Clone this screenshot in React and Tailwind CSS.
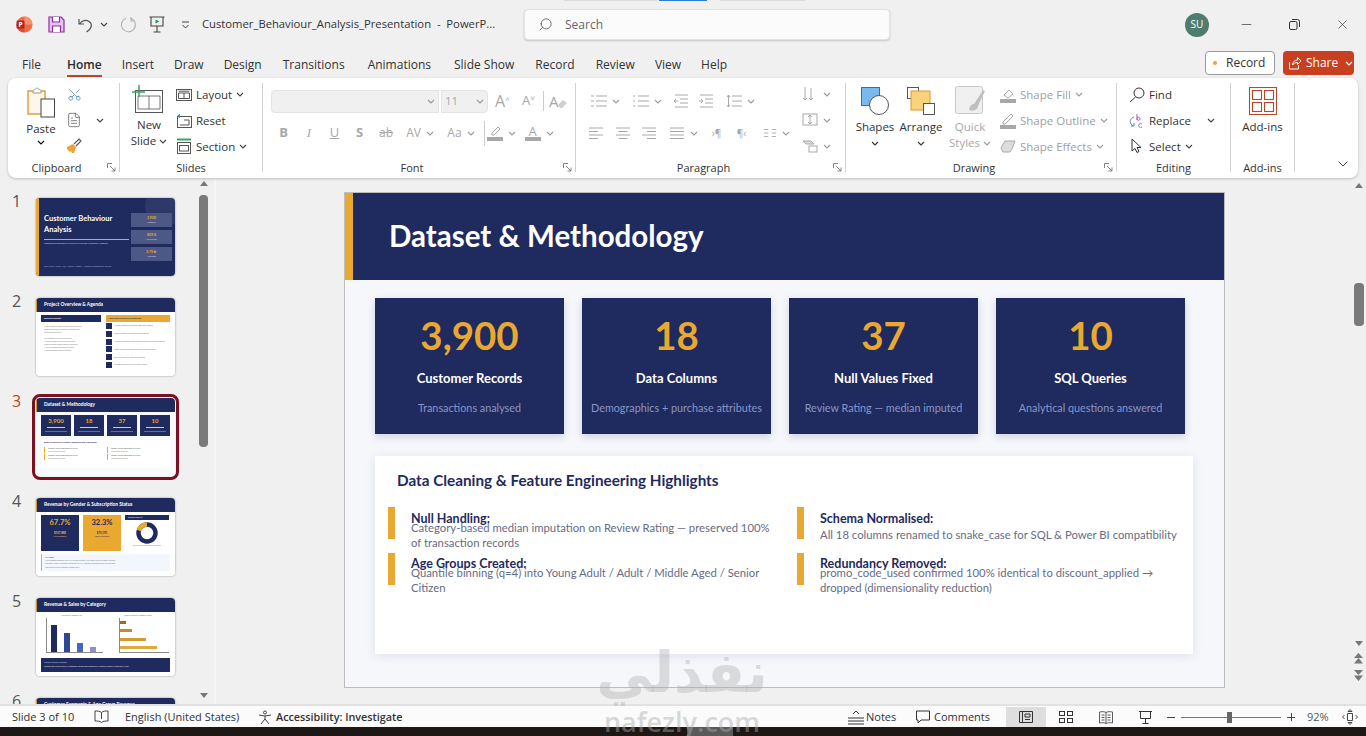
import { Search, Minus, X, Scissors, FileText } from 'lucide-react';

const UI = "font-['Open_Sans',sans-serif]";
const SLIDE = "font-['Lato',sans-serif]";

function Chev({ className = 'text-[#444]' }) {
  return (
    <svg width="8" height="5" viewBox="0 0 8 5" className={`shrink-0 ${className}`} fill="none" stroke="currentColor" strokeWidth="1.1">
      <path d="M1 1l3 3 3-3" />
    </svg>
  );
}

function Launcher() {
  return (
    <svg width="9" height="9" viewBox="0 0 9 9" fill="none" stroke="#777" strokeWidth="0.9" className="absolute right-[3px] bottom-[4px]">
      <path d="M.5 5V.5H5M3 3l5 5M8 4.5V8H4.5" />
    </svg>
  );
}

function Sep() {
  return <div className="w-px h-[89px] mt-[2px] bg-[#d2d2d2] shrink-0"></div>;
}

function Group({ width, label, launcher, children }) {
  return (
    <div className="relative flex flex-col h-[95px] shrink-0" style={{ width }}>
      <div className="h-[78px] flex">{children}</div>
      <div className={`h-[17px] text-center text-[11px] leading-[17px] text-[#333] ${launcher ? 'pr-[14px]' : ''}`}>{label}</div>
      {launcher && <Launcher />}
    </div>
  );
}

function Row({ icon, label, chev, gray, className = '' }) {
  return (
    <div className={`h-[26px] flex items-center gap-[4px] text-[11.5px] whitespace-nowrap ${gray ? 'text-[#a0a0a0]' : 'text-[#333]'} ${className}`}>
      <span className="w-[16px] h-[16px] flex items-center justify-center shrink-0">{icon}</span>
      <span>{label}</span>
      {chev && <Chev className={gray ? 'text-[#999]' : 'text-[#444]'} />}
    </div>
  );
}

// small stroke icons, all 16 box
function Ico({ children, stroke = '#555', size = 16, box = 16 }) {
  return (
    <svg width={size} height={size} viewBox={`0 0 ${box} ${box}`} fill="none" stroke={stroke} strokeWidth="1" className="shrink-0">
      {children}
    </svg>
  );
}

function PptLogo() {
  return (
    <svg width="17" height="17" viewBox="0 0 17 17" className="shrink-0">
      <circle cx="8.5" cy="8.5" r="8" fill="#ed6c47" />
      <path d="M8.5.5a8 8 0 0 1 8 8h-8z" fill="#ff8f6b" />
      <path d="M8.5 16.5a8 8 0 0 1-8-8h8z" fill="#d35230" />
      <rect x="0.5" y="4.5" width="8" height="8" rx="1.2" fill="#b7261c" />
      <text x="2.4" y="11" fontSize="6.5" fontWeight="700" fill="#fff" fontFamily="Open Sans">P</text>
    </svg>
  );
}

function TitleBar() {
  return (
    <div className="relative h-[45px] pt-[4px] flex items-center shrink-0">
      <div className="ml-[16px]"><PptLogo /></div>
      <svg width="17" height="17" viewBox="0 0 17 17" className="ml-[15px] shrink-0" fill="#e6c2ee" stroke="#8a2fa0" strokeWidth="1.2">
        <path d="M1 1h12l3 3v12H1z" />
        <path d="M4.5 1v5h7V1M4.5 16v-6h8v6" fill="#fff" />
      </svg>
      <svg width="16" height="16" viewBox="0 0 16 16" className="ml-[13px] shrink-0" fill="none" stroke="#555" strokeWidth="1.2">
        <path d="M1 2v5h5M1.5 7C4 3.5 8 2.5 11 4.5c3.500 2.300 3.500 6.500-2.500 10.500" />
      </svg>
      <Chev className="ml-[6px] text-[#444]" />
      <svg width="17" height="17" viewBox="0 0 17 17" className="ml-[12px] shrink-0" fill="none" stroke="#b5b5b5" strokeWidth="1.2">
        <path d="M11.500 2.500A7 7 0 1 1 6 2.200M11 1v4h4" />
      </svg>
      <svg width="16" height="17" viewBox="0 0 16 17" className="ml-[12px] shrink-0" fill="none" stroke="#444" strokeWidth="1.1">
        <path d="M.5 1h15M2 1v9h12V1M8 10v6M4.500 16h7" />
        <path d="M6.500 3.500l4 2-4 2z" fill="#2e9b57" stroke="none" />
      </svg>
      <svg width="9" height="8" viewBox="0 0 9 8" className="ml-[16px] shrink-0" fill="none" stroke="#444" strokeWidth="1">
        <path d="M1 1h7M1.500 4l3 3 3-3" />
      </svg>
      <span className="ml-[12px] w-[322px] text-[11.25px] text-[#333] whitespace-pre">Customer_Behaviour_Analysis_Presentation  -  PowerP...</span>
      <div className="w-[366px] h-[31px] bg-[#fbfbfb] rounded-[4px] border border-[#e2e2e2] shadow-[0_1px_2px_rgba(0,0,0,0.18)] flex items-center pl-[13px] gap-[12px] text-[12px] text-[#666]">
        <Search size={15} strokeWidth={1.3} className="text-[#555] -scale-x-100" />
        <span>Search</span>
      </div>
      <div className="ml-auto flex items-center">
        <div className="w-[24px] h-[24px] rounded-full bg-[#4f7c6f] text-white text-[10px] flex items-center justify-center">SU</div>
        <Minus size={15} strokeWidth={1.1} className="ml-[30px] text-[#333]" />
        <svg width="11" height="11" viewBox="0 0 11 11" className="ml-[35px]" fill="none" stroke="#333" strokeWidth="1">
          <rect x="0.500" y="2.500" width="7.500" height="8" rx="1.500" />
          <path d="M3 .5h5.500A2 2 0 0 1 10.500 2.500V8" />
        </svg>
        <X size={15} strokeWidth={1.1} className="ml-[35px] mr-[16px] text-[#333]" />
      </div>
      <div className="absolute top-0 left-[564px] w-[93px] h-px bg-[#dcdcdc]"></div>
      <div className="absolute top-0 left-[659px] w-[48px] h-px bg-[#2b7cd3]"></div>
      <div className="absolute top-0 left-[720px] w-[85px] h-px bg-[#dcdcdc]"></div>
    </div>
  );
}

function TabBar() {
  const tabs = [
    ['Insert', 'ml-[20px]'], ['Draw', 'ml-[20px]'], ['Design', 'ml-[20px]'],
    ['Transitions', 'ml-[21px]'], ['Animations', 'ml-[23px]'], ['Slide Show', 'ml-[23px]'], ['Record', 'ml-[21px]'],
    ['Review', 'ml-[21px]'], ['View', 'ml-[20px]'], ['Help', 'ml-[20px]'],
  ];
  return (
    <div className="h-[33px] pt-[6px] flex items-center text-[12px] text-[#333] shrink-0">
      <span className="ml-[22px]">File</span>
      <span className="relative ml-[26px] font-semibold text-[#2b2b2b]">
        Home
        <span className="absolute left-0 right-0 -bottom-[3px] h-[2px] bg-[#b7472a]"></span>
      </span>
      {tabs.map(([t, c]) => <span key={t} className={c}>{t}</span>)}
      <div className="ml-auto mb-[3px] flex items-center gap-[8px] mr-[12px]">
        <div className="w-[70px] h-[24px] bg-white border border-[#9a9a9a] rounded-[4px] flex items-center text-[12px] pl-[7px] gap-[9px]">
          <span className="w-[4px] h-[4px] rounded-full bg-[#f0a030]"></span>
          Record
        </div>
        <div className="w-[71px] h-[24px] bg-[#c8401f] rounded-[4px] flex items-center text-white text-[12px] pl-[5px] gap-[4px]">
          <svg width="14" height="14" viewBox="0 0 14 14" fill="none" stroke="#fff" strokeWidth="1">
            <path d="M1.500 6v7h9V9M4.500 9c0-3 2.500-5 5-5V1.500L13 5l-3.500 3.500V6.500C7.500 6.500 5.500 7.500 4.500 9z" />
          </svg>
          Share
          <Chev className="text-white ml-[3px]" />
        </div>
      </div>
    </div>
  );
}

function Cell({ w, children, className = '' }) {
  return <div className={`flex items-center justify-center gap-[5px] shrink-0 ${className}`} style={{ width: w }}>{children}</div>;
}

const G = '#a8a8a8';

function Ribbon() {
  return (
    <div className="mx-[8px] h-[100px] bg-white rounded-[8px] shadow-[0_1px_3px_rgba(0,0,0,0.22)] flex items-start pt-[3px] shrink-0 relative">
      <Group width={111} label="Clipboard" launcher>
        <div className="w-[50px] ml-[8px] flex flex-col items-center pt-[6px]">
          <svg width="28" height="31" viewBox="0 0 28 31" fill="none">
            <path d="M1 4h17v23H1z" fill="#fdf6ea" stroke="#e0a040" strokeWidth="1.500" />
            <path d="M6 4c0-1 1.500-1.500 2-1.500S9 .8 10 .8s1.200 1.700 2 1.700 2 .5 2 1.500v2H6z" fill="#fff" stroke="#999" />
            <rect x="14" y="12" width="13.500" height="18" fill="#fff" stroke="#444" />
          </svg>
          <span className="text-[11.5px] text-[#333] mt-[3px] leading-[16px]">Paste</span>
          <Chev className="mt-[3px]" />
        </div>
        <div className="flex flex-col">
          <div className="h-[26px] w-[16px] flex items-center justify-center"><Scissors size={15} strokeWidth={1.1} className="text-[#3a7ab8] -rotate-90" /></div>
          <div className="h-[26px] flex items-center gap-[14px]"><FileText size={16} strokeWidth={1} className="text-[#444]" /><Chev /></div>
          <div className="h-[26px] w-[16px] flex items-center justify-center">
            <svg width="16" height="16" viewBox="0 0 16 16">
              <path d="M1 9l6-3 3 3-2 6H6l-1-2-1 1-3-3z" fill="#eda33a" />
              <path d="M8 6l5-5 2 2-5 5" fill="none" stroke="#555" strokeWidth="1.100" />
            </svg>
          </div>
        </div>
      </Group>
      <Sep />
      <Group width={142} label="Slides">
        <div className="w-[58px] flex flex-col items-center pt-[4px] text-[11.5px] text-[#333] leading-[16px] shrink-0">
          <svg width="31" height="28" viewBox="0 0 31 28" fill="none" stroke="#555" className="-ml-[4px]">
            <rect x="3.500" y="5.500" width="27" height="22" />
            <path d="M6 11h22v13H6zM17 11v13" strokeWidth="0.800" />
            <path d="M7 0v12M0 7h13" stroke="#3da35d" strokeWidth="1.500" />
          </svg>
          <span className="mt-[4px]">New</span>
          <span className="flex items-center gap-[3px]">Slide <Chev /></span>
        </div>
        <div className="flex flex-col -ml-[2px] pt-[1px]">
          <Row label="Layout" chev icon={<Ico><rect x=".5" y="2.500" width="15" height="11" /><path d="M2.500 6h11v5.500h-11zM8 6v5.500M2.500 4.200h11" /></Ico>} />
          <Row label="Reset" icon={<Ico><rect x="1.500" y="3.500" width="14" height="11" /><path d="M8 7h5v5H4" /><path d="M1 3l3-2.500V5.500z" fill="#3a8dd8" stroke="none" /></Ico>} />
          <Row label="Section" chev icon={<Ico><path d="M1 1.500h14" stroke="#3da35d" strokeWidth="2" /><rect x="1.500" y="4.500" width="13" height="11" /><rect x="3.500" y="7.500" width="9" height="5.500" /></Ico>} />
        </div>
      </Group>
      <Sep />
      <Group width={312} label="Font" launcher>
        <div className="flex flex-col pl-[8px]">
          <div className="h-[38px] flex items-center mt-[1px]">
            <div className="w-[168px] h-[23px] bg-[#f0f0f0] border border-[#e4e4e4] rounded-l-[4px] flex items-center justify-end pr-[3px]"><Chev className="text-[#999]" /></div>
            <div className="w-[47px] ml-[2px] h-[23px] bg-[#f0f0f0] border border-[#e4e4e4] rounded-r-[4px] flex items-center justify-between px-[3px] text-[11.5px] text-[#a8a8a8]">11<Chev className="text-[#999]" /></div>
            <span className="ml-[7px] text-[16px] text-[#a8a8a8] w-[24px]">A<sup className="text-[8px]">^</sup></span>
            <span className="ml-[3px] text-[13px] text-[#a8a8a8] w-[20px]">A<sup className="text-[8px]">˅</sup></span>
            <div className="w-px h-[20px] bg-[#ccc] ml-[1px]"></div>
            <span className="ml-[5px] text-[15px] text-[#a8a8a8]">A</span>
            <svg width="10" height="10" viewBox="0 0 10 10" fill="#cfcfcf" className="-ml-[1px] mt-[6px]"><path d="M0 6l5-5 4 3-5 5H2z" /></svg>
          </div>
          <div className="h-[26px] flex items-center text-[#a8a8a8] text-[13px]">
            <Cell w={25} className="font-bold">B</Cell>
            <Cell w={26} className="italic font-['Liberation_Serif',serif]">I</Cell>
            <Cell w={25} className="underline">U</Cell>
            <Cell w={25} className="font-bold">S</Cell>
            <Cell w={28} className="line-through text-[12px]">ab</Cell>
            <Cell w={40} className="text-[12px]">AV<Chev className="text-[#999]" /></Cell>
            <Cell w={42} className="text-[12px]">Aa<Chev className="text-[#999]" /></Cell>
            <div className="w-px h-[25px] bg-[#ccc] ml-[2px]"></div>
            <Cell w={33}>
              <svg width="16" height="15" viewBox="0 0 16 15" fill="none" stroke="#a8a8a8"><path d="M5 7l6-6 2 2-6 6H5z" /><rect x="0" y="11" width="16" height="4" fill="#a8a8a8" stroke="none" /></svg>
              <Chev className="text-[#999]" />
            </Cell>
            <Cell w={38} className="ml-[2px]">
              <span className="flex flex-col items-center leading-[11px]">A<span className="w-[16px] h-[4px] bg-[#a8a8a8]"></span></span>
              <Chev className="text-[#999]" />
            </Cell>
          </div>
        </div>
      </Group>
      <Sep />
      <Group width={269} label="Paragraph" launcher>
        <div className="flex">
          <div className="flex flex-col pl-[7px] w-[222px]">
            <div className="h-[38px] flex items-center mt-[1px]">
              <Cell w={44}><Ico stroke={G} box={16}><path d="M5 3h11M5 8h11M5 13h11M0 3h3M0 8h3M0 13h3" strokeWidth="1.200" /></Ico><Chev className="text-[#999]" /></Cell>
              <Cell w={41}><Ico stroke={G} box={16}><path d="M5 3h11M5 8h11M5 13h11M0 3h2M0 8h2M0 13h2" strokeWidth="1.200" /></Ico><Chev className="text-[#999]" /></Cell>
              <Cell w={25}><Ico stroke={G}><path d="M2 2h13M7 6h8M7 10h8M2 14h13M5 8H1M3 6L1 8l2 2" /></Ico></Cell>
              <Cell w={25}><Ico stroke={G}><path d="M2 2h13M7 6h8M7 10h8M2 14h13M1 8h4M3 6l2 2-2 2" /></Ico></Cell>
              <Cell w={44}><Ico stroke={G}><path d="M6 3h10M6 8h10M6 13h10M2.500 2v12M1 4l1.500-2L4 4M1 12l1.500 2L4 12" /></Ico><Chev className="text-[#999]" /></Cell>
            </div>
            <div className="h-[26px] flex items-center">
              <Cell w={26}><Ico stroke={G}><path d="M1 3h14M1 6.500h9M1 10h14M1 13.500h9" /></Ico></Cell>
              <Cell w={27}><Ico stroke={G}><path d="M1 3h14M3.500 6.500h9M1 10h14M3.500 13.500h9" /></Ico></Cell>
              <Cell w={26}><Ico stroke={G}><path d="M1 3h14M6 6.500h9M1 10h14M6 13.500h9" /></Ico></Cell>
              <Cell w={42}><Ico stroke={G}><path d="M1 3h14M1 6.500h14M1 10h14M1 13.500h14" /></Ico><Chev className="text-[#999]" /></Cell>
              <Cell w={25} className="text-[10px] text-[#a8a8a8]">›¶</Cell>
              <Cell w={25} className="text-[10px] text-[#a8a8a8]">¶‹</Cell>
              <Cell w={44}><Ico stroke={G} size={14}><path d="M1 4h5M1 8h5M1 12h5M10 4h5M10 8h5M10 12h5" /></Ico><Chev className="text-[#999]" /></Cell>
            </div>
          </div>
          <div className="flex flex-col pl-[4px]">
            <div className="h-[26px] flex items-center gap-[5px]"><Ico stroke={G}><path d="M3 1v13M1 12l2 2 2-2M9 2v12M7 12l2 2 2-2" /></Ico><Chev className="text-[#999]" /></div>
            <div className="h-[26px] flex items-center gap-[5px]"><Ico stroke={G}><rect x="1" y="2" width="14" height="11" /><path d="M8 3v9M6 5l2-2 2 2M6 10l2 2 2-2" /></Ico><Chev className="text-[#999]" /></div>
            <div className="h-[26px] flex items-center gap-[5px]"><Ico stroke={G}><path d="M1 3h8l3 3H4z" fill="#ddd" /><rect x="7" y="8" width="8" height="6" /></Ico><Chev className="text-[#999]" /></div>
          </div>
        </div>
      </Group>
      <Sep />
      <Group width={270} label="Drawing" launcher>
        <div className="w-[58px] flex flex-col items-center pt-[6px] text-[11.5px] text-[#333] leading-[16px]">
          <svg width="29" height="28" viewBox="0 0 29 28">
            <rect x=".5" y=".5" width="18" height="18" fill="#7ab8f0" stroke="#2a6fb8" />
            <circle cx="18" cy="18" r="9.500" fill="#fff" stroke="#555" />
          </svg>
          <span className="mt-[4px]">Shapes</span>
          <Chev className="mt-[6px]" />
        </div>
        <div className="w-[46px] -ml-[6px] flex flex-col items-center pt-[6px] text-[11.5px] text-[#333] leading-[16px]">
          <svg width="28" height="28" viewBox="0 0 28 28">
            <rect x=".5" y=".5" width="11" height="11" fill="#fff" stroke="#555" />
            <rect x="4" y="4" width="19" height="19" fill="#fbd27c" stroke="#d49a2c" />
            <rect x="16.500" y="16.500" width="11" height="11" fill="#fff" stroke="#555" />
          </svg>
          <span className="mt-[4px]">Arrange</span>
          <Chev className="mt-[6px]" />
        </div>
        <div className="w-[46px] ml-[3px] flex flex-col items-center pt-[6px] text-[11.5px] text-[#a8a8a8] leading-[16px]">
          <svg width="31" height="30" viewBox="0 0 31 30" className="-mt-[1px]">
            <rect x=".5" y=".5" width="27" height="27" rx="2" fill="#f0f0f0" stroke="#c8c8c8" />
            <path d="M14 24c1-5 3-6 5-6l9-14 2 1-7 15c0 3-4 6-9 4z" fill="#c0c0c0" />
          </svg>
          <span className="mt-[3px]">Quick</span>
          <span className="flex items-center gap-[3px]">Styles <Chev className="text-[#999]" /></span>
        </div>
        <div className="flex flex-col ml-[7px] pt-[1px]">
          <Row gray label="Shape Fill" chev icon={<Ico stroke={G}><path d="M4 8l5-5 4 4-5 4z" /><rect y="12" width="16" height="4" fill={G} stroke="none" /></Ico>} />
          <Row gray label="Shape Outline" chev icon={<Ico stroke={G}><path d="M3 9l8-8 2 2-8 8H3z" /><rect y="12" width="16" height="4" fill={G} stroke="none" /></Ico>} />
          <Row gray label="Shape Effects" chev icon={<Ico stroke={G}><path d="M1 10l4-7h10l-3 8-2 3H3z" fill="#ddd" /></Ico>} />
        </div>
      </Group>
      <Sep />
      <Group width={113} label="Editing">
        <div className="flex flex-col pl-[12px] pt-[1px]">
          <Row label="Find" icon={<Ico stroke="#333"><circle cx="10" cy="6" r="5" /><path d="M6.500 10L1 15" /></Ico>} />
          <div className="flex items-center gap-[16px]">
            <Row label="Replace" icon={
              <svg width="16" height="16" viewBox="0 0 16 16" fill="none" stroke="#3a8dd8">
                <path d="M5 4C2 5 0 8 2 11l2 2M2 13h3v-3" />
                <path d="M8 1v6M8 5.500a1.500 1.500 0 1 1 0 .5" stroke="#a040b0" strokeWidth=".9" />
                <path d="M13 11a2 2 0 1 0 0 3" strokeWidth=".9" />
              </svg>
            } />
            <Chev />
          </div>
          <Row label="Select" chev icon={<Ico stroke="#333"><path d="M3 1v12l3-2.500 2 4 2-1-2-4h4z" /></Ico>} />
        </div>
      </Group>
      <Sep />
      <Group width={63} label="Add-ins">
        <div className="w-full flex flex-col items-center pt-[6px] text-[11.5px] text-[#333] leading-[16px]">
          <svg width="28" height="28" viewBox="0 0 28 28" fill="none" stroke="#b7472a" strokeWidth="1.100">
            <rect x=".5" y=".5" width="27" height="27" />
            <rect x="3.500" y="3.500" width="9" height="9" />
            <rect x="15.500" y="3.500" width="9" height="9" />
            <rect x="3.500" y="15.500" width="9" height="9" />
            <rect x="15.500" y="15.500" width="9" height="9" />
          </svg>
          <span className="mt-[4px]">Add-ins</span>
        </div>
      </Group>
      <Sep />
      <svg width="10" height="6" viewBox="0 0 10 6" fill="none" stroke="#444" className="absolute right-[10px] bottom-[11px]">
        <path d="M.5.5L5 5 9.500.5" />
      </svg>
    </div>
  );
}

function T({ c = 'text-[#777]', children }) {
  return <p className={`text-[1.8px] leading-[3.200px] whitespace-nowrap overflow-hidden ${c}`}>{children}</p>;
}

function ThumbHead({ title }) {
  return (
    <div className="h-[14px] bg-[#1f2a5e] flex items-center pl-[7px] border-l-[1px] border-[#c9962c] shrink-0">
      <span className="text-[4.800px] font-bold text-white whitespace-nowrap">{title}</span>
    </div>
  );
}

function Thumb1() {
  return (
    <div className="relative h-full bg-[#1f2a5e] border-l-[3px] border-[#e9a830] flex pl-[5px] overflow-hidden">
      <div className="absolute -right-[10px] -top-[12px] w-[40px] h-[40px] rounded-full bg-[rgba(255,255,255,0.07)]"></div>
      <div className="w-[85px] flex flex-col pt-[15px]">
        <p className="text-[7.500px] leading-[11px] font-bold text-white">Customer Behaviour Analysis</p>
        <div className="h-[1px] bg-[#e9a830] mt-[4px]"></div>
        <p className="mt-[2px] text-[2.400px] text-[#c6cce8] whitespace-nowrap">Optimising Retention & Revenue Through Consumer Insights</p>
        <p className="mt-[19px] text-[1.800px] text-[#aab2d8] whitespace-nowrap">Data Analyst · Python · SQL · Power BI · Gamma — Customer Shopping Data Analytics</p>
      </div>
      <div className="relative ml-[2px] w-[41px] flex flex-col gap-[3px] pt-[15px]">
        {[['3,900', 'Customers'], ['$59.8', 'Avg Purchase'], ['3.75★', 'Avg Rating']].map(([a, b]) => (
          <div key={a} className="h-[14px] bg-[#4e5887] flex flex-col items-center justify-center">
            <span className="text-[3.500px] leading-[5px] font-bold text-[#e9a830]">{a}</span>
            <span className="text-[1.800px] leading-[3px] text-[#d6daf0]">{b}</span>
          </div>
        ))}
      </div>
    </div>
  );
}

function Thumb2() {
  const rows = ['Analyse customer purchasing patterns by segment', 'Uncover category & seasonal revenue drivers', 'Measure subscription and discount influence on spend behaviour', 'Identify top performing products and shipping modes', 'Build an interactive Power BI dashboard', 'Recommend data-driven retention actions'];
  return (
    <div className="h-full bg-white flex flex-col">
      <ThumbHead title="Project Overview & Agenda" />
      <div className="flex px-[5px] pt-[3px] gap-[5px]">
        <div className="w-[60px]">
          <div className="h-[7px] bg-[#1f2a5e] text-[2px] leading-[7px] font-bold text-white pl-[3px]">Business Challenge</div>
          <div className="mt-[3px] px-[3px]">
            <T>A retail company wants to understand customer</T>
            <T>shopping behaviour to improve retention and</T>
            <T>increase lifetime value.</T>
            <div className="h-[2px]"></div>
            <T>Key questions the analysis answers:</T>
            <T>• Which groups drive the most revenue</T>
            <T>• Do discounts change purchase behaviour</T>
            <T>• How do subscribers spend vs others</T>
            <T>• Which products rate the highest</T>
          </div>
        </div>
        <div className="w-[64px]">
          <div className="h-[7px] bg-[#e9a830] text-[2px] leading-[7px] font-bold text-[#1f2a5e] pl-[3px]">Project Deliverables & Workstreams</div>
          <div className="mt-[1px] flex flex-col gap-[1.800px]">
            {rows.map((r) => (
              <div key={r} className="flex items-center gap-[2px] h-[6px]">
                <span className="w-[6px] h-[6px] bg-[#1f2a5e] shrink-0"></span>
                <T>{r}</T>
              </div>
            ))}
          </div>
        </div>
      </div>
    </div>
  );
}

function Thumb3() {
  return (
    <div className="h-full bg-[#f7f9fc] flex flex-col">
      <ThumbHead title="Dataset & Methodology" />
      <div className="flex gap-[3px] px-[5px] pt-[3px]">
        {['3,900', '18', '37', '10'].map((n) => (
          <div key={n} className="w-[30px] h-[21px] bg-[#1f2a5e] flex flex-col items-center pt-[2px]">
            <span className="text-[6px] leading-[8px] font-bold text-[#e9a830]">{n}</span>
            <span className="w-[18px] h-[1px] mt-[2px] bg-[#c8cce0]"></span>
            <span className="w-[22px] h-[1px] mt-[3px] bg-[#5e6aa0]"></span>
          </div>
        ))}
      </div>
      <div className="mx-[5px] mt-[4px] h-[28px] bg-white px-[3px] pt-[1px]">
        <p className="text-[2.500px] font-bold text-[#1f2a5e] whitespace-nowrap">Data Cleaning & Feature Engineering Highlights</p>
        <div className="grid grid-cols-2 gap-x-[2px] mt-[2px]">
          {[1, 2, 3, 4].map((k) => (
            <div key={k} className="border-l border-[#e9a830] pl-[3px] h-[6px] mb-[1px]">
              <T c="text-[#555]">Category-based imputation on review</T>
              <T c="text-[#888]">of transaction records</T>
            </div>
          ))}
        </div>
      </div>
    </div>
  );
}

function Thumb4() {
  return (
    <div className="h-full bg-white flex flex-col">
      <ThumbHead title="Revenue by Gender & Subscription Status" />
      <div className="flex px-[5px] pt-[3px] gap-[4px]">
        <div className="w-[38px] h-[36px] bg-[#1f2a5e] flex flex-col items-center pt-[3px]">
          <span className="text-[7.500px] leading-[10px] font-bold text-[#e9a830]">67.7%</span>
          <span className="text-[2.800px] mt-[3px] font-bold text-[#e9c070]">$157,890</span>
          <span className="text-[1.800px] text-[#e9c070]">Male Customers</span>
        </div>
        <div className="w-[38px] h-[36px] bg-[#e9a830] flex flex-col items-center pt-[3px]">
          <span className="text-[7.500px] leading-[10px] font-bold text-[#1f2a5e]">32.3%</span>
          <span className="text-[2.800px] mt-[3px] font-bold text-[#1f2a5e]">$75,191</span>
          <span className="text-[1.800px] text-[#1f2a5e]">Female Customers</span>
        </div>
        <div className="w-[44px] flex flex-col items-center">
          <div className="w-full h-[5px] bg-[#1f2a5e] text-[1.800px] leading-[5px] text-white pl-[3px]">Revenue Share (%)</div>
          <svg width="22" height="22" viewBox="0 0 22 22" className="mt-[2px]">
            <circle cx="11" cy="11" r="8.500" fill="none" stroke="#1f2a5e" strokeWidth="4.500" />
            <path d="M11 2.500A8.500 8.500 0 0 0 3 8.500" fill="none" stroke="#e9a830" strokeWidth="4.500" />
          </svg>
          <T>■ Male Revenue ■ Female Revenue</T>
        </div>
      </div>
      <div className="mx-[5px] mt-[3px] h-[17px] border-l border-[#e9a830] bg-[#f3f6fc] pl-[3px] pt-[2px]">
        <T c="text-[#333]">Key Insight</T>
        <T>Male customers account for 67.7% of total revenue ($157,890), driven by higher purchase</T>
        <T>frequency. Female customers represent $75,191. Targeted campaigns could close the gap</T>
        <T>and increase overall customer lifetime value.</T>
      </div>
    </div>
  );
}

function Thumb5() {
  const bars = [[27, 'bg-[#1f2a5e]'], [19, 'bg-[#2f4795]'], [9, 'bg-[#4a66b8]'], [5, 'bg-[#8a90c8]']];
  const hbars = [[6, 'bg-[#a8651c]'], [12, 'bg-[#c98a28]'], [26, 'bg-[#d49a30]'], [37, 'bg-[#e0aa38]']];
  return (
    <div className="h-full bg-white flex flex-col">
      <ThumbHead title="Revenue & Sales by Category" />
      <div className="flex px-[5px] pt-[2px] gap-[4px] h-[44px]">
        <div className="w-[62px] flex flex-col">
          <T c="text-[#666] text-center">Revenue by Category ($K)</T>
          <div className="ml-[5px] mt-[1px] h-[35px] border-l border-b border-[#8a8a8a] flex items-end gap-[7px] pl-[4px]">
            {bars.map(([h, c], i) => <div key={i} className={`w-[6px] ${c}`} style={{ height: h }}></div>)}
          </div>
        </div>
        <div className="w-[62px] flex flex-col">
          <T c="text-[#666] text-center">Orders Volume by Category (Units)</T>
          <div className="ml-[12px] mt-[1px] h-[35px] border-l border-b border-[#8a8a8a] flex flex-col justify-around">
            {hbars.map(([w, c], i) => <div key={i} className={`h-[3px] ${c}`} style={{ width: w }}></div>)}
          </div>
        </div>
      </div>
      <div className="mx-[5px] mt-[2px] h-[14px] bg-[#1f2a5e] pl-[3px] pt-[3px]">
        <T c="text-[#c6cce8]">Category Revenue Highlights</T>
        <div className="mt-[1px]"><T c="text-[#e0e4f4]">Clothing: Top revenue driver   •   Accessories: Strong, high-margin line   •   Footwear: Steady   •   Outerwear: Niche</T></div>
      </div>
    </div>
  );
}

function ThumbRow({ n, active, children }) {
  return (
    <div className="flex h-[100px] shrink-0">
      <span className={`w-[36px] pl-[12px] -mt-[4px] text-[16px] leading-[14px] ${active ? 'text-[#c43e1c]' : 'text-[#555]'}`}>{n}</span>
      <div className={`relative w-[139px] h-[78px] rounded-[4px] overflow-hidden ${active ? 'outline-[3px] outline outline-offset-[1px] outline-[#7b1020] rounded-[2px]' : 'shadow-[0_0_2px_rgba(0,0,0,0.45)]'} ${SLIDE}`}>
        {children}
      </div>
    </div>
  );
}

function Thumbs() {
  return (
    <div className="w-[216px] flex shrink-0 overflow-hidden border-r-[2px] border-[#f6f6f6]">
      <div className="w-[198px] pt-[20px] flex flex-col overflow-hidden">
        <ThumbRow n="1"><Thumb1 /></ThumbRow>
        <ThumbRow n="2"><Thumb2 /></ThumbRow>
        <ThumbRow n="3" active><Thumb3 /></ThumbRow>
        <ThumbRow n="4"><Thumb4 /></ThumbRow>
        <ThumbRow n="5"><Thumb5 /></ThumbRow>
        <ThumbRow n="6"><ThumbHead title="Customer Segments & Age Group Revenue" /></ThumbRow>
      </div>
      <div className="w-[16px] flex flex-col items-start pl-[1px]">
        <div className="w-0 h-0 mt-[3px] border-l-[4px] border-r-[4px] border-b-[5px] border-l-transparent border-r-transparent border-b-[#777] translate-x-[1px]"></div>
        <div className="w-[9px] h-[252px] mt-[9px] rounded-[4px] bg-[#7a7a7a]"></div>
        <div className="w-0 h-0 mt-[246px] border-l-[4px] border-r-[4px] border-t-[5px] border-l-transparent border-r-transparent border-t-[#777] translate-x-[1px]"></div>
      </div>
    </div>
  );
}

function StatCard({ num, label, sub }) {
  return (
    <div className="w-[189px] h-[136px] bg-[#1f2a5e] shadow-[0_3px_8px_rgba(31,42,94,0.18)] flex flex-col items-center pt-[14px]">
      <span className="text-[38.500px] leading-[46px] font-bold text-[#e9a830]">{num}</span>
      <span className="mt-[11px] text-[13px] leading-[18px] font-bold text-white">{label}</span>
      <span className="mt-[13px] text-[10.800px] leading-[16px] text-[#8a96c8] whitespace-nowrap">{sub}</span>
    </div>
  );
}

function Highlight({ head, lines, tall, second }) {
  return (
    <div className="flex h-[46px]">
      <div className="w-[7px] h-[32px] bg-[#e9a830] shrink-0"></div>
      <div className={`ml-[16px] ${second ? 'pt-[5px]' : 'pt-[6px]'}`}>
        <p className="text-[12.500px] leading-[12px] font-bold text-[#1f2a5e]">{head}</p>
        <div className={`text-[11.300px] leading-[15px] text-[#666c85] whitespace-nowrap ${tall ? 'mt-[2px]' : '-mt-[5px]'}`}>
          {lines.map((l) => <p key={l}>{l}</p>)}
        </div>
      </div>
    </div>
  );
}

function Slide() {
  return (
    <div className={`w-[881px] h-[496px] bg-[#f5f7fb] border border-[#bdbdbd] shrink-0 ${SLIDE}`}>
      <div className="h-[87px] bg-[#1f2a5e] border-l-[8px] border-[#e9a830] flex items-center pl-[36px]">
        <h1 className="text-[29.500px] font-bold text-white">Dataset & Methodology</h1>
      </div>
      <div className="flex pl-[30px] pt-[18px] gap-[18px]">
        <StatCard num="3,900" label="Customer Records" sub="Transactions analysed" />
        <StatCard num="18" label="Data Columns" sub="Demographics + purchase attributes" />
        <StatCard num="37" label="Null Values Fixed" sub="Review Rating — median imputed" />
        <StatCard num="10" label="SQL Queries" sub="Analytical questions answered" />
      </div>
      <div className="ml-[30px] mt-[22px] w-[818px] h-[198px] bg-white shadow-[0_2px_10px_rgba(31,42,94,0.1)] pl-[13px] pt-[14px]">
        <h2 className="ml-[9px] text-[15.250px] leading-[20px] font-bold text-[#1f2a5e]">Data Cleaning & Feature Engineering Highlights</h2>
        <div className="grid grid-cols-[409px_1fr] mt-[17px]">
          <Highlight head="Null Handling:" lines={['Category-based median imputation on Review Rating — preserved 100%', 'of transaction records']} />
          <Highlight tall head="Schema Normalised:" lines={['All 18 columns renamed to snake_case for SQL & Power BI compatibility']} />
          <Highlight second head="Age Groups Created:" lines={['Quantile binning (q=4) into Young Adult / Adult / Middle Aged / Senior', 'Citizen']} />
          <Highlight second head="Redundancy Removed:" lines={['promo_code_used confirmed 100% identical to discount_applied →', 'dropped (dimensionality reduction)']} />
        </div>
      </div>
    </div>
  );
}

function RightScroll() {
  return (
    <div className="w-[15px] ml-auto flex flex-col items-center shrink-0">
      <div className="mt-[5px] w-0 h-0 border-l-[4px] border-r-[4px] border-b-[5px] border-l-transparent border-r-transparent border-b-[#777]"></div>
      <div className="w-[10px] h-[43px] mt-[95px] rounded-[4px] bg-[#7a7a7a]"></div>
      <div className="mt-[315px] w-0 h-0 border-l-[4px] border-r-[4px] border-t-[5px] border-l-transparent border-r-transparent border-t-[#777]"></div>
      <svg width="9" height="11" viewBox="0 0 9 11" fill="#777" className="mt-[7px]"><path d="M4.500 0L9 5H0zM4.500 5L9 10.500H0z" /></svg>
      <svg width="9" height="11" viewBox="0 0 9 11" fill="#777" className="mt-[6px]"><path d="M4.500 5L0 0h9zM4.500 11L0 5.500h9z" /></svg>
    </div>
  );
}

function StatusBar() {
  return (
    <div className="h-[23px] pt-px bg-[#fbfbfb] border-t-[2px] border-[#e2e2e2] flex items-center text-[11px] text-[#333] shrink-0">
      <span className="ml-[12px] w-[82px]">Slide 3 of 10</span>
      <svg width="15" height="14" viewBox="0 0 15 14" fill="none" stroke="#444"><path d="M7.500 2.500C6 1 3 1 1 1v10c2 0 5 0 6.500 1.500C9 11 12 11 14 11V1c-2 0-5 0-6.500 1.500zM7.500 2.500V9" /></svg>
      <span className="ml-[16px] w-[133px] whitespace-nowrap">English (United States)</span>
      <svg width="15" height="15" viewBox="0 0 15 15" fill="none" stroke="#444">
        <circle cx="7" cy="2.500" r="1.500" />
        <path d="M1 5l6 1 6-1M7 6v3M3 14l4-5 4 5" />
      </svg>
      <span className="ml-[3px] font-semibold text-[10.800px] whitespace-nowrap">Accessibility: Investigate</span>
      <div className="ml-auto flex items-center h-full">
        <svg width="16" height="15" viewBox="0 0 16 15" fill="none" stroke="#333"><path d="M0 8h16M0 11h16M0 14h16M5 4l3-3 3 3" /></svg>
        <span className="ml-[2px] w-[50px]">Notes</span>
        <svg width="14" height="14" viewBox="0 0 14 14" fill="none" stroke="#333"><path d="M.5 1h13v9H5l-3 3v-3H.5z" /></svg>
        <span className="ml-[4px] w-[72px]">Comments</span>
        <div className="w-[40px] h-full bg-[#dedede] flex items-center justify-center">
          <svg width="14" height="12" viewBox="0 0 14 12" fill="none" stroke="#333"><path d="M.5.5h13v11H.5zM3.500.5v11M6 3h5v3H6zM6 8.500h5" /></svg>
        </div>
        <div className="w-[40px] flex justify-center">
          <svg width="14" height="12" viewBox="0 0 14 12" fill="none" stroke="#333"><rect x=".5" y=".5" width="5" height="4" /><rect x="8.500" y=".5" width="5" height="4" /><rect x=".5" y="7.500" width="5" height="4" /><rect x="8.500" y="7.500" width="5" height="4" /></svg>
        </div>
        <div className="w-[40px] flex justify-center">
          <svg width="14" height="13" viewBox="0 0 14 13" fill="none" stroke="#333"><path d="M.5 1c2.500-.5 5-.5 6.500.5 1.500-1 4-1 6.500-.5v11c-2.500-.5-5-.5-6.500.5-1.500-1-4-1-6.500-.5zM7 1.500v11M2.500 4h3M2.500 6.500h3M2.500 9h3M8.500 4h3M8.500 6.500h3M8.500 9h3" strokeWidth=".8" /></svg>
        </div>
        <div className="w-[38px] flex justify-center">
          <svg width="13" height="13" viewBox="0 0 13 13" fill="none" stroke="#333"><path d="M0 .5h13M1.500.5v7h10v-7M6.500 7.500v5M3.500 12.500h6" /></svg>
        </div>
        <span className="ml-[3px] w-[8px] h-px bg-[#444]"></span>
        <div className="ml-[6px] relative w-[100px] h-px bg-[#777]">
          <span className="absolute left-[46px] -top-[5px] w-[5px] h-[11px] bg-[#666]"></span>
          <span className="absolute left-[49px] -top-[3px] w-px h-[7px] bg-[#666]"></span>
        </div>
        <span className="ml-[6px] w-[8px] h-[8px] relative">
          <span className="absolute top-[3.500px] left-0 w-[8px] h-px bg-[#444]"></span>
          <span className="absolute left-[3.500px] top-0 w-px h-[8px] bg-[#444]"></span>
        </span>
        <span className="ml-[12px] w-[25px] text-[#555]">92%</span>
        <svg width="16" height="16" viewBox="0 0 16 16" fill="none" stroke="#333" className="ml-[10px] mr-[8px]"><path d="M5.500 4.500h5v7h-5zM8 0.500l-2 2h4zM8 15.500l-2-2h4zM2.500 6L.5 8l2 2M13.500 6l2 2-2 2" strokeWidth=".9" /></svg>
      </div>
    </div>
  );
}

export default function App() {
  return (
    <div className={`relative w-[1366px] h-[736px] overflow-hidden bg-[#f0f0f0] flex flex-col ${UI}`}>
      <TitleBar />
      <TabBar />
      <Ribbon />
      <div className="h-[526px] flex shrink-0 overflow-hidden">
        <Thumbs />
        <div className="pl-[128px] pt-[14px]"><Slide /></div>
        <RightScroll />
      </div>
      <StatusBar />
      <div className="h-[9px] bg-[#1d1815] relative overflow-hidden shrink-0">
        <span className="absolute left-[1258px] top-[6px] text-[11px] leading-[14px] text-white">6:24 PM</span>
        <span className="absolute left-[687px] top-0 w-[46px] h-[9px] bg-[#5a5a5a]"></span>
      </div>
      <div className="absolute left-[592px] top-[640px] pointer-events-none flex flex-col items-center w-[180px]">
        <span dir="rtl" className="font-['DejaVu_Sans',sans-serif] text-[56px] leading-[66px] font-bold text-[rgba(170,170,170,0.38)]">نفذلي</span>
        <span className="-mt-[1px] text-[27px] leading-[34px] font-semibold text-[rgba(170,170,170,0.45)]">nafezly.com</span>
      </div>
    </div>
  );
}
